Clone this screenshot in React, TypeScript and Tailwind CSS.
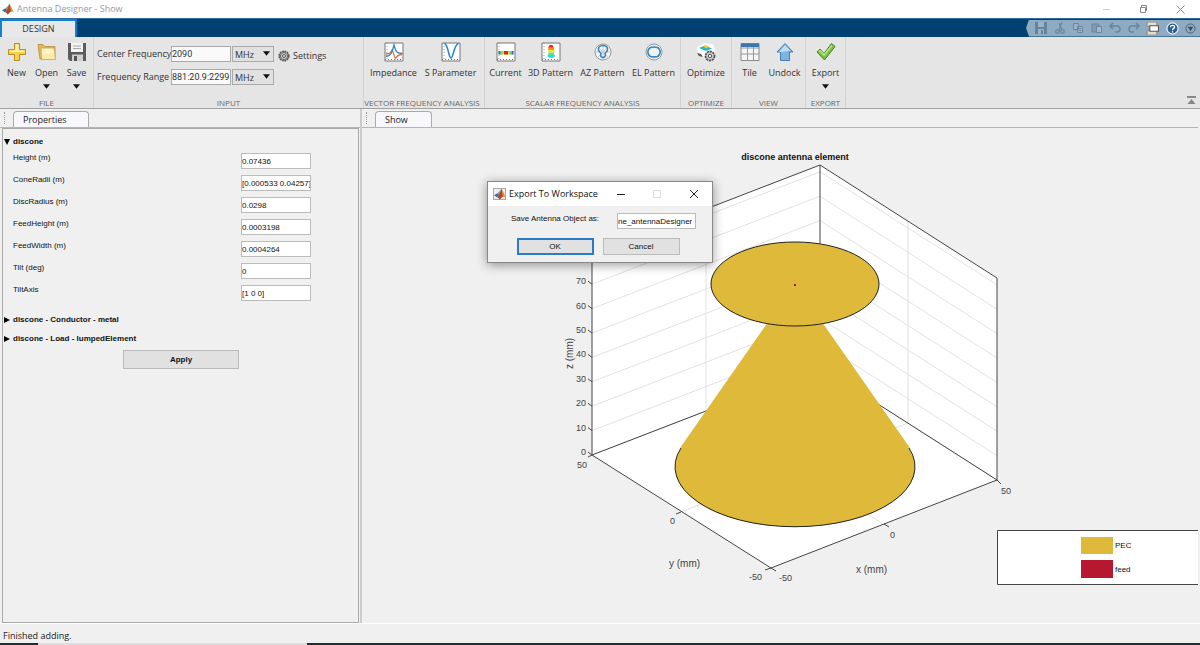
import React, { useState } from "react";
import clsx from "clsx";

const ui = "font-['Open_Sans','Noto_Sans',sans-serif]";

function Caret({ className }: { className?: string }) {
  return (
    <svg viewBox="0 0 8 5" className={clsx("w-[7px] h-[5px]", className)}>
      <path d="M0 0h8L4 5z" fill="#111" />
    </svg>
  );
}

function MatlabLogo() {
  return (
    <svg viewBox="0 0 16 16" className="size-3 shrink-0">
      <path d="M0 9.5 4.5 7l2.5 2-3 3.2z" fill="#2f6fb5" />
      <path d="M4.5 7C7 5.500 8 3 10 1L7 9z" fill="#5aa7c9" />
      <path d="M10 1C8.500 4 7 10 4 12.200c2 .3 3 2.300 3.500 3.300C9.500 14 11 11 13 11.500z" fill="#c0431f" />
      <path d="M10 1c2 2.500 3.500 8 6 12-1.500-1.200-2.500-1.800-4-1.500z" fill="#ee8a28" />
    </svg>
  );
}

function NewIcon() {
  return (
    <svg viewBox="0 0 20 20" className="size-5">
      <path d="M7.500 1.500h5v6h6v5h-6v6h-5v-6h-6v-5h6z" fill="#f6d34d" stroke="#b98b22" />
      <path d="M8.500 2.500h3v6h6v1.500h-15v-1.500h6z" fill="#fff3b0" />
    </svg>
  );
}

function OpenIcon() {
  return (
    <svg viewBox="0 0 20 20" className="size-5">
      <path d="M1 2.500h5l2 2h10V17H3z" fill="#e2b95c" stroke="#b58b3c" strokeWidth=".8" />
      <path d="M4 6h13l1.500 11.500h-14z" fill="#fdeaa8" stroke="#c59a45" strokeWidth=".6" />
      <path d="M5 7h11l.8 4-11 1z" fill="#fff6cf" />
    </svg>
  );
}

function SaveIcon() {
  return (
    <svg viewBox="0 0 20 20" className="size-5">
      <path d="M1 1h18v18H3l-2-2z" fill="#5c5c5c" />
      <path d="M4 1h12v9H4z" fill="#f3f3f3" />
      <path d="M6 4h8M6 6.500h8" stroke="#aaa" />
      <path d="M5 12.500h11V19H5z" fill="#d0d0d0" />
      <path d="M7 14h3v5H7z" fill="#555" />
    </svg>
  );
}

function PlotFrame({ children }: { children: React.ReactNode }) {
  return (
    <svg viewBox="0 0 20 20" className="size-5">
      <path d="M1 1h18v18H1z" fill="#fff" stroke="#777" />
      <path d="M3 1v18" stroke="#999" strokeDasharray="1 2" />
      <path d="M1 17.500h18" stroke="#777" strokeDasharray="1 2" />
      {children}
    </svg>
  );
}

function ImpedanceIcon() {
  return (
    <PlotFrame>
      <path d="M2 12c4-.5 4.500-1 6-4 1 0 2 7 3.500 8.500C13 15 13 12.500 18 12.500" fill="none" stroke="#e0713f" strokeWidth="1.300" />
      <path d="M2 14.500c5-.5 6-4 8-11.500 2 7.500 3 8.500 8.500 8.500" fill="none" stroke="#2f86c6" strokeWidth="1.300" />
    </PlotFrame>
  );
}

function SParamIcon() {
  return (
    <PlotFrame>
      <path d="M3.500 1.500C7.500 3 7.500 16 10 16s2.500-13 7.500-14.500" fill="none" stroke="#2f86c6" strokeWidth="1.600" />
    </PlotFrame>
  );
}

function CurrentIcon() {
  return (
    <PlotFrame>
      <path d="M2.500 9h15v3.500h-15z" fill="#f1d11c" />
      <path d="M2.500 9h2v3.500h-2zM15.500 9h2v3.500h-2z" fill="#2a6fe0" />
      <path d="M4.500 9h2v3.500h-2zM13.500 9h2v3.500h-2z" fill="#4cd8c0" />
      <path d="M8 9h4v3.500H8z" fill="#d8261c" />
    </PlotFrame>
  );
}

function Pattern3DIcon() {
  return (
    <PlotFrame>
      <path d="M7.500 6C7 1.500 13 1.500 12.500 6z" fill="#e5321f" />
      <path d="M7.500 5.500h5.500V8H7z" fill="#f6911e" />
      <path d="M7 8h6.500v2.500h-6z" fill="#f4e32a" />
      <path d="M7.500 10.500h5.500V13h-6z" fill="#5fe08a" />
      <path d="M6.500 13h7.500c0 2-1 3-3.500 3s-4-1-4-3z" fill="#25dbe8" />
    </PlotFrame>
  );
}

function PolarIcon({ children }: { children: React.ReactNode }) {
  return (
    <svg viewBox="0 0 20 20" className="size-5" fill="none">
      <circle cx="10" cy="10" r="8" fill="#f4f4f4" stroke="#999" />
      <path d="M10 1v18M1 10h18M3.600 3.600l12.800 12.800M16.400 3.600 3.600 16.400" stroke="#bbb" strokeWidth=".7" />
      {children}
    </svg>
  );
}

function AzIcon() {
  return (
    <PolarIcon>
      <path d="M10 3.500c3.500 0 5 2 4.500 4.500-.4 2-2.500 2.500-2.500 4 1 1.500 0 3.500-2 3.500s-3-2-2-3.500c0-1.500-2.100-2-2.500-4C5 5.500 6.500 3.500 10 3.500z" stroke="#2f86c6" strokeWidth="1.500" />
    </PolarIcon>
  );
}

function ElIcon() {
  return (
    <PolarIcon>
      <path d="M6.500 5.500c2-.6 5-.6 7 0 3.500 2 3.500 7 0 9-2 .6-5 .6-7 0-3.500-2-3.500-7 0-9z" fill="#eef3f7" stroke="#2f86c6" strokeWidth="1.500" />
    </PolarIcon>
  );
}

function OptimizeIcon() {
  return (
    <svg viewBox="0 0 20 20" className="size-5">
      <path d="m1 5 7-4 9 1 2 5v7l-8 3-9-4z" fill="#fbfbfb" />
      <path d="m3 6 6-2.500 7 3-6 2.500z" fill="#1fb6c9" />
      <path d="m7 4 3-1 3 2-3 1.500z" fill="#f3c928" />
      <path d="m1 11 4 1 2 3-4-1z" fill="#555" />
      <circle cx="14" cy="14" r="4.500" fill="#ccc" stroke="#555" strokeWidth="1.800" strokeDasharray="2.200 .7" />
      <circle cx="14" cy="14" r="1.700" fill="#eee" stroke="#555" />
    </svg>
  );
}

function TileIcon() {
  return (
    <svg viewBox="0 0 20 20" className="size-5">
      <path d="M1 1.500h18v17H1z" fill="#f5f5f5" stroke="#8b8b8b" />
      <path d="M1 1.500h18V5H1z" fill="#3c76ad" />
      <path d="M1 6h18M1 12h18M7.500 5v13.500M13.500 5v13.500" stroke="#999" />
    </svg>
  );
}

function UndockIcon() {
  return (
    <svg viewBox="0 0 20 20" className="size-5">
      <path d="M10 1.500 18 10h-3.500v8.500h-9V10H2z" fill="#7fb4de" stroke="#3f7fb5" />
      <path d="m10 3 5.500 6H13l-6 1H4z" fill="#c0dcf2" />
    </svg>
  );
}

function ExportIcon() {
  return (
    <svg viewBox="0 0 20 20" className="size-5">
      <path d="m1 10 3-3 4 4.500L15.500 1.500l3.500 3L8.500 18z" fill="#79c142" stroke="#4b7f26" />
      <path d="m3 9.500 1-1 4 4.500 8-9.500" fill="none" stroke="#c3ec93" strokeWidth="1.200" />
    </svg>
  );
}

function GearIcon() {
  return (
    <svg viewBox="0 0 12 12" className="size-3" fill="none" stroke="#555">
      <circle cx="6" cy="6" r="4.800" strokeWidth="1.600" strokeDasharray="1.900 .6" />
      <circle cx="6" cy="6" r="3.600" fill="#ccc" strokeWidth=".9" />
      <circle cx="6" cy="6" r="1.500" fill="#eee" />
    </svg>
  );
}

type ToolProps = { label: string; icon: React.ReactNode; width: string; menu?: boolean };

function Tool({ label, icon, width, menu }: ToolProps) {
  return (
    <button className={clsx("flex flex-col items-center shrink-0", width)}>
      {icon}
      <span className="mt-1 text-[9px] leading-[14px] whitespace-nowrap">{label}</span>
      {menu && <Caret className="mt-1" />}
    </button>
  );
}

function Group({ title, children, className }: { title: string; children: React.ReactNode; className?: string }) {
  return (
    <section className={clsx("flex flex-col justify-between shrink-0 border-r border-[#d2d2d2] pt-[5px]", className)}>
      <div className="flex justify-center">{children}</div>
      <h2 className="text-center text-[8px] leading-[11px] text-[#666] whitespace-nowrap">{title}</h2>
    </section>
  );
}

function FrequencyRow({ id, label, value }: { id: string; label: string; value: string }) {
  return (
    <div className="flex items-center">
      <label htmlFor={id} className="w-[74px] whitespace-nowrap">
        {label}
      </label>
      <input id={id} defaultValue={value} className="w-[60px] h-4 border border-[#aaa] bg-[#fafafa] font-[Roboto,sans-serif]" />
      <div className="relative ml-px">
        <select aria-label={label + " unit"} className="appearance-none w-[42px] h-4 border border-[#aaa] bg-[#e1e1e1] pl-[2px] leading-[13px]">
          <option>MHz</option>
          <option>GHz</option>
        </select>
        <Caret className="absolute right-1 top-[5px] pointer-events-none" />
      </div>
    </div>
  );
}

function Ribbon() {
  return (
    <div className="flex h-[72px] bg-[#e5e5e5] border-b border-[#a0a0a0] text-[#333]">
      <Group title="FILE" className="w-[94px]">
        <Tool label="New" icon={<NewIcon />} width="w-[30px]" />
        <Tool label="Open" icon={<OpenIcon />} width="w-[30px]" menu />
        <Tool label="Save" icon={<SaveIcon />} width="w-[30px]" menu />
      </Group>
      <Group title="INPUT" className="w-[270px]">
        <div className="flex w-full gap-1 pl-[3px] pt-1 text-[9px]">
          <div className="flex flex-col gap-[7px]">
            <FrequencyRow id="center" label="Center Frequency" value="2090" />
            <FrequencyRow id="range" label="Frequency Range" value="881:20.9:2299" />
          </div>
          <button className="flex items-center gap-[3px] h-5">
            <GearIcon />
            Settings
          </button>
        </div>
      </Group>
      <Group title="VECTOR FREQUENCY ANALYSIS" className="w-[121px] pr-1">
        <Tool label="Impedance" icon={<ImpedanceIcon />} width="w-[57px]" />
        <Tool label="S Parameter" icon={<SParamIcon />} width="w-[57px]" />
      </Group>
      <Group title="SCALAR FREQUENCY ANALYSIS" className="w-[196px]">
        <Tool label="Current" icon={<CurrentIcon />} width="w-[38px]" />
        <Tool label="3D Pattern" icon={<Pattern3DIcon />} width="w-[52px]" />
        <Tool label="AZ Pattern" icon={<AzIcon />} width="w-[52px]" />
        <Tool label="EL Pattern" icon={<ElIcon />} width="w-[50px]" />
      </Group>
      <Group title="OPTIMIZE" className="w-[51px]">
        <Tool label="Optimize" icon={<OptimizeIcon />} width="w-[48px]" />
      </Group>
      <Group title="VIEW" className="w-[74px]">
        <Tool label="Tile" icon={<TileIcon />} width="w-[32px]" />
        <Tool label="Undock" icon={<UndockIcon />} width="w-[38px]" />
      </Group>
      <Group title="EXPORT" className="w-[40px]">
        <Tool label="Export" icon={<ExportIcon />} width="w-[38px]" menu />
      </Group>
      <button aria-label="Minimize toolstrip" className="ml-auto self-end mr-1 mb-[3px]">
        <svg viewBox="0 0 9 9" className="size-[9px]">
          <path d="M0 0h9v2H0zM4.500 3 8.500 8h-8z" fill="#888" />
        </svg>
      </button>
    </div>
  );
}

function QuickAccess() {
  return (
    <div className="flex items-center justify-between h-[17px] w-[174px] bg-[#8fabc2] pl-[9px] pr-1 [clip-path:polygon(0_50%,3px_0,100%_0,100%_100%,3px_100%)]">
      <svg viewBox="0 0 12 12" className="size-[12px]">
        <path d="M0 0h12v12H0z" fill="#66839c" />
        <path d="M3 0h6v5H3zM3 7h6v5H3z" fill="#9cb3c7" />
        <path d="M6 8h2v4H6z" fill="#66839c" />
      </svg>
      <svg viewBox="0 0 12 12" className="size-[12px]" fill="none" stroke="#6b87a0" strokeWidth="1.300">
        <path d="M8 0 5 8M5 1l3 7" />
        <circle cx="3.500" cy="9.500" r="1.800" />
        <circle cx="8.500" cy="9.500" r="1.800" />
      </svg>
      <svg viewBox="0 0 12 12" className="size-[12px]" fill="#9cb1c4" stroke="#6b87a0">
        <path d="M1.500 1.500h5v6h-5zM5.500 4.500h5v6h-5z" />
        <path d="M7 6.500h2M7 8.500h2" />
      </svg>
      <svg viewBox="0 0 12 12" className="size-[12px]" fill="#7f9ab1" stroke="#6b87a0">
        <path d="M1 2h7v8H1z" />
        <path d="M5.500 4.500h5v6h-5z" fill="#a4b8ca" />
      </svg>
      <svg viewBox="0 0 12 12" className="size-[12px]" fill="none" stroke="#6b87a0" strokeWidth="1.600">
        <path d="M4 1 1 4l3 3M1 4h7c4 0 4 6 0 6H6" />
      </svg>
      <svg viewBox="0 0 12 12" className="size-[12px]" fill="none" stroke="#6b87a0" strokeWidth="1.600">
        <path d="m8 1 3 3-3 3M11 4H4C0 4 0 10 4 10h2" />
      </svg>
      <svg viewBox="0 0 12 12" className="size-[13px]">
        <path d="M1 0h9v4H1zM1 8h9v4H1z" fill="#e5dccb" stroke="#777" strokeWidth=".7" />
        <path d="M3.500 3.500h8v5h-8z" fill="#fff" stroke="#555" />
      </svg>
      <svg viewBox="0 0 14 14" className="size-[13px]">
        <circle cx="7" cy="7" r="6" fill="#2f5f92" stroke="#eee" strokeWidth="1.300" />
        <path d="M4.800 5.500C5 2.800 9.300 3 9.200 5.500 9.100 7 7 6.800 7 8.800M7 10v1.300" fill="none" stroke="#fff" strokeWidth="1.400" />
      </svg>
      <svg viewBox="0 0 12 12" className="size-[11px]">
        <circle cx="6" cy="6" r="5" fill="none" stroke="#4d5e6e" />
        <path d="M3 4h6L6 9z" fill="#3d4c59" />
      </svg>
    </div>
  );
}

const properties = [
  { name: "Height (m)", value: "0.07436" },
  { name: "ConeRadii (m)", value: "[0.000533 0.04257]" },
  { name: "DiscRadius (m)", value: "0.0298" },
  { name: "FeedHeight (m)", value: "0.0003198" },
  { name: "FeedWidth (m)", value: "0.0004264" },
  { name: "Tilt (deg)", value: "0" },
  { name: "TiltAxis", value: "[1 0 0]" },
];

function SectionHeader({ title, open, onClick }: { title: string; open?: boolean; onClick?: () => void }) {
  return (
    <button onClick={onClick} className="flex items-center gap-[3px] h-[19px] font-bold">
      <svg viewBox="0 0 6 6" className="size-[6px]">
        <path d={open ? "M0 0h6L3 6z" : "M0 0l6 3-6 3z"} />
      </svg>
      {title}
    </button>
  );
}

function PanelTab({ title, width }: { title: string; width: string }) {
  return (
    <div className="flex items-end h-[19px] shrink-0 border-b border-[#b5b5b5] pl-1">
      <span className="w-px h-3 mb-[3px] mr-2 border-l border-dotted border-[#999]" />
      <div className={clsx("h-4 rounded-t-[4px] border border-b-0 border-[#aaa] bg-[#f8f8fc] text-[9px] leading-[15px] pl-[9px] text-[#222]", width, ui)}>
        {title}
      </div>
    </div>
  );
}

function Properties() {
  const [open, setOpen] = useState(true);
  return (
    <aside className="flex flex-col w-[362px] shrink-0 border-r-2 border-[#ccc]">
      <PanelTab title="Properties" width="w-[76px]" />
      <div className="flex-1 ml-[2px] mr-px border border-[#aaa] pl-px pt-[3px] flex flex-col items-start text-[8px] text-[#111]">
        <SectionHeader title="discone" open={open} onClick={() => setOpen(!open)} />
        {open && (
          <div className="w-full pl-[9px] pb-[5px]">
            {properties.map((p) => (
              <div key={p.name} className="flex items-start h-[22px]">
                <label htmlFor={p.name} className="w-[228px] leading-[14px]">
                  {p.name}
                </label>
                <input id={p.name} defaultValue={p.value} className="w-[70px] h-4 mt-[2px] border border-[#bbb] bg-white" />
              </div>
            ))}
          </div>
        )}
        <SectionHeader title="discone - Conductor - metal" />
        <SectionHeader title="discone - Load - lumpedElement" />
        <button className="self-center w-[116px] h-[19px] mt-[2px] border border-[#bbb] bg-[#e1e1e1] font-bold">Apply</button>
      </div>
    </aside>
  );
}

// corners of the axes box, in plot coordinates
const left = { x: 592, y: 455 };
const front = { x: 771, y: 568 };
const right = { x: 997, y: 480 };
const back = { x: 820, y: 367 };
const boxHeight = 202;
const zStep = 24.4;
const zTicks = [0, 10, 20, 30, 40, 50, 60, 70, 80];

function AntennaPlot() {
  return (
    <svg viewBox="362 128 836 495" className="w-full font-['Liberation_Sans',Arial,sans-serif]" fontSize="9" fill="#444">
      <path d="M592 253 820 165 997 278V480L771 568 592 455z" fill="#fff" />
      <g stroke="#e2e2e2" fill="none">
        {zTicks.map((z, i) => (
          <path key={z} d={`M${left.x} ${left.y - i * zStep}L${back.x} ${back.y - i * zStep}L${right.x} ${right.y - i * zStep}`} />
        ))}
        <path d="M706 209v202l177 113M908 221v202L681 512" />
      </g>
      <g stroke="#444" fill="none">
        <path d={`M${left.x} ${left.y}L${front.x} ${front.y}L${right.x} ${right.y}v${-boxHeight}L${back.x} ${back.y - boxHeight}L${left.x} ${left.y - boxHeight}z`} />
        <path d={`M${left.x} ${left.y}L${back.x} ${back.y}L${right.x} ${right.y}M${back.x} ${back.y}v${-boxHeight}`} />
        {zTicks.map((z, i) => (
          <path key={z} d={`M${left.x} ${left.y - i * zStep}l-4 -3`} />
        ))}
        <path d="m592 455-4 2M681 512l-5 2M771 568l-6 2M771 568l5 3M884 524l5 3M997 480l4 4" />
      </g>
      <path d="M768 322 680 448Q795 420 910 448L822 322z" fill="#deb93a" />
      <ellipse cx="795" cy="467" rx="120" ry="60" fill="#deb93a" />
      <path d="M681 448A120 60 0 1 0 909 448" fill="none" stroke="#222" />
      <ellipse cx="795" cy="284" rx="84" ry="42" fill="#deb93a" stroke="#222" />
      <path d="M794 284h2v2h-2z" fill="#a2142f" />
      <text x="795" y="160" textAnchor="middle" fontWeight="bold" fill="#111">
        discone antenna element
      </text>
      {zTicks.slice(0, 8).map((z, i) => (
        <text key={z} x="586" y={455 - i * zStep} textAnchor="end">
          {z}
        </text>
      ))}
      <text x="577" y="468">50</text>
      <text x="670" y="524">0</text>
      <text x="749" y="580">-50</text>
      <text x="779" y="581">-50</text>
      <text x="890" y="538">0</text>
      <text x="1001" y="494">50</text>
      <g fontSize="10">
        <text x="669" y="567">y (mm)</text>
        <text x="856" y="573">x (mm)</text>
        <text transform="translate(573 369) rotate(-90)">z (mm)</text>
      </g>
      <path d="M1198 530.500H997.500v54H1198" fill="#fff" stroke="#444" />
      <path d="M1081 537h32v17h-32z" fill="#deb93a" />
      <path d="M1081 560h32v18h-32z" fill="#b5182f" />
      <g fontSize="8" fill="#111">
        <text x="1115" y="548">PEC</text>
        <text x="1115" y="572">feed</text>
      </g>
    </svg>
  );
}

function ExportDialog() {
  return (
    <div role="dialog" aria-label="Export To Workspace" className="absolute left-[487px] top-[181px] w-[226px] border border-[#888] bg-[#f0f0f0] shadow-[0_2px_10px_rgba(0,0,0,0.4)] text-[8px] text-[#111]">
      <div className={clsx("flex items-center h-6 bg-white pl-[5px]", ui)}>
        <span className="flex items-center justify-center w-[13px] h-3 border border-[#aaa] bg-[#eee]">
          <MatlabLogo />
        </span>
        <span className="flex-1 pl-[3px] text-[9px] whitespace-nowrap">Export To Workspace</span>
        <button aria-label="Minimize" className="w-[36px] flex justify-center">
          <span className="w-2 h-px bg-[#222]" />
        </button>
        <button aria-label="Maximize" disabled className="w-[36px] flex justify-center">
          <span className="size-2 border border-[#ddd]" />
        </button>
        <button aria-label="Close" className="w-[37px] flex justify-center">
          <svg viewBox="0 0 8 8" className="size-2">
            <path d="m0 0 8 8M8 0 0 8" stroke="#222" />
          </svg>
        </button>
      </div>
      <div className="flex items-center justify-between pl-[23px] pr-4 pt-[7px]">
        <label htmlFor="object" className="pb-1">
          Save Antenna Object as:
        </label>
        <input id="object" defaultValue="ne_antennaDesigner" className="w-[79px] h-4 border border-[#bbb] bg-white" />
      </div>
      <div className="flex justify-center gap-[9px] pr-1 pt-[9px] pb-[7px]">
        <button className="w-[77px] h-[17px] border-2 border-[#2b7cc4] bg-[#e1e1e1] leading-[13px]">OK</button>
        <button className="w-[77px] h-[17px] border border-[#bbb] bg-[#e1e1e1] leading-[15px]">Cancel</button>
      </div>
    </div>
  );
}

function App() {
  return (
    <div className="relative flex flex-col min-h-screen overflow-hidden bg-[#f0f0f0] font-['Liberation_Sans',Arial,sans-serif]">
      <header className={ui}>
        <div className="flex items-center h-[18px] bg-white pl-[2px] text-[#999]">
          <MatlabLogo />
          <h1 className="pl-[3px] text-[9px]">Antenna Designer - Show</h1>
          <div className="flex ml-auto mr-[15px] gap-[28px]">
            <button aria-label="Minimize window">
              <svg viewBox="0 0 9 9" className="size-[9px]" stroke="#ccc">
                <path d="M1 4.500h7" />
              </svg>
            </button>
            <button aria-label="Restore window">
              <svg viewBox="0 0 9 9" className="size-[9px]" fill="none" stroke="#888">
                <path d="M1.500 2.500h5v5h-5zM2.500 2.500v-2h5v5h-1" />
              </svg>
            </button>
            <button aria-label="Close window">
              <svg viewBox="0 0 9 9" className="size-[9px]" stroke="#888">
                <path d="m.5.5 8 8M8.500.5l-8 8" />
              </svg>
            </button>
          </div>
        </div>
        <div className="flex h-[19px] items-center justify-between bg-[#004073] border-t border-[#2f6d9f]">
          <button className="self-stretch w-[77px] border-2 border-b-0 border-[#1080d0] bg-[#e8e8e8] text-[9px] text-[#333]">DESIGN</button>
          <QuickAccess />
        </div>
        <Ribbon />
      </header>
      <main className="flex flex-1">
        <Properties />
        <div className="flex-1 flex flex-col min-w-0 mr-[2px]">
          <PanelTab title="Show" width="w-[57px]" />
          <AntennaPlot />
        </div>
      </main>
      <footer className="shrink-0">
        <p className={clsx("flex items-center h-5 border-t border-white pl-[3px] pt-1 text-[9px] text-[#222]", ui)}>Finished adding.</p>
        <div className="flex h-[2px] bg-[#1c2f33]">
          <span className="w-[269px] ml-[38px] bg-[#ddd]" />
        </div>
      </footer>
      <ExportDialog />
    </div>
  );
}

export default App;
